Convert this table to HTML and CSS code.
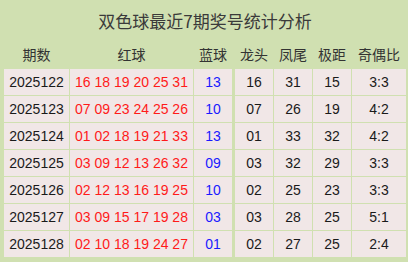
FILE: index.html
```html
<!DOCTYPE html>
<html lang="zh">
<head>
<meta charset="utf-8">
<link rel="stylesheet" href="styles.css">
</head>
<body>
<div class="panel">
  <div class="title">双色球最近7期奖号统计分析</div>
  <table class="stats">
    <colgroup>
      <col class="c-issue"><col class="c-red"><col class="c-blue"><col class="c-num gap"><col class="c-num"><col class="c-num"><col class="c-ratio">
    </colgroup>
    <thead>
      <tr><th>期数</th><th>红球</th><th>蓝球</th><th class="split">龙头</th><th>凤尾</th><th>极距</th><th>奇偶比</th></tr>
    </thead>
    <tbody>
      <tr><td>2025122</td><td class="red">16 18 19 20 25 31</td><td class="blue">13</td><td class="split">16</td><td>31</td><td>15</td><td>3:3</td></tr>
      <tr><td>2025123</td><td class="red">07 09 23 24 25 26</td><td class="blue">10</td><td class="split">07</td><td>26</td><td>19</td><td>4:2</td></tr>
      <tr><td>2025124</td><td class="red">01 02 18 19 21 33</td><td class="blue">13</td><td class="split">01</td><td>33</td><td>32</td><td>4:2</td></tr>
      <tr><td>2025125</td><td class="red">03 09 12 13 26 32</td><td class="blue">09</td><td class="split">03</td><td>32</td><td>29</td><td>3:3</td></tr>
      <tr><td>2025126</td><td class="red">02 12 13 16 19 25</td><td class="blue">10</td><td class="split">02</td><td>25</td><td>23</td><td>3:3</td></tr>
      <tr><td>2025127</td><td class="red">03 09 15 17 19 28</td><td class="blue">03</td><td class="split">03</td><td>28</td><td>25</td><td>5:1</td></tr>
      <tr><td>2025128</td><td class="red">02 10 18 19 24 27</td><td class="blue">01</td><td class="split">02</td><td>27</td><td>25</td><td>2:4</td></tr>
    </tbody>
  </table>
</div>
</body>
</html>
```

FILE: styles.css
```css
html, body {
  margin: 0;
  padding: 0;
  background: #d0e0b1;
}

.panel {
  width: 408px;
  height: 262px;
  background: #d0e0b1;
  padding: 0 1px 0 3px;
  box-sizing: border-box;
}

.title {
  height: 39px;
  padding-top: 2px;
  box-sizing: border-box;
  line-height: 37px;
  text-align: center;
  font-family: "Noto Sans CJK SC", "Liberation Sans", sans-serif;
  font-size: 17px;
  color: #3a3a3a;
}

.stats {
  border-collapse: separate;
  border-spacing: 1px;
  table-layout: fixed;
  width: 404px;
  font-family: "Liberation Sans", "Noto Sans CJK SC", sans-serif;
  font-size: 14px;
}

.c-issue { width: 65px; }
.c-red { width: 123px; }
.c-blue { width: 38px; }
.c-num { width: 38px; }
.c-num.gap { width: 40px; }
.c-ratio { width: 54px; }

.stats th {
  height: 28px;
  padding: 0;
  font-family: "Noto Sans CJK SC", "Liberation Sans", sans-serif;
  font-size: 14px;
  font-weight: normal;
  color: #333;
  text-align: center;
  vertical-align: middle;
}

.stats td {
  height: 26px;
  padding: 0;
  background: #f1e7e7;
  color: #1a1a1a;
  text-align: center;
  vertical-align: middle;
  white-space: nowrap;
  line-height: 26px;
}

.stats .split {
  border-left: 2px solid #d0e0b1;
}

.stats td.red { color: #ff1a1a; }
.stats td.blue { color: #1a1aff; }
```
